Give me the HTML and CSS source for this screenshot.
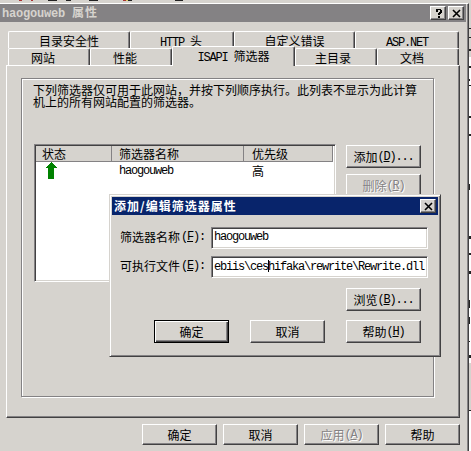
FILE: index.html
```html
<!DOCTYPE html>
<html lang="zh-CN">
<head>
<meta charset="utf-8">
<title>haogouweb 属性</title>
<link rel="stylesheet" href="styles.css">
</head>
<body>
<div class="desktop">
  <svg class="behind-top" width="471" height="3" shape-rendering="crispEdges"><path fill="#a33" d="M19 0h3v1h-3zM31 0h2v1h-2zM123 0h3v1h-3z"/><path fill="#222" d="M48 0h9v1h-9zM66 0h5v1h-5zM89 0h9v1h-9zM128 0h4v1h-4zM175 0h8v1h-8z"/><path fill="#dc6" d="M126 0h2v1h-2z"/></svg>
  <div class="stage">
    <main class="window">
      <header class="titlebar">
        <h1><span class="en">haogouweb </span>属性</h1>
        <button class="cap"><svg width="9" height="9" shape-rendering="crispEdges"><path d="M2 0h5v1h1v3h-1v1h-1v1h-2v-2h1v-1h1v-2h-2v2h-2v-2h0zM4 7h2v2h-2z"/></svg></button>
        <button class="cap"><svg width="9" height="9"><path d="M1 1l7 7M8 1l-7 7" stroke="#000" stroke-width="1.6"/></svg></button>
      </header>
      <nav class="tabs back">
        <a class="tab w1">目录安全性</a><a class="tab w2"><span class="en">HTTP </span>头</a><a class="tab w3">自定义错误</a><a class="tab w4"><span class="en">ASP.NET</span></a>
      </nav>
      <nav class="tabs front">
        <a class="tab">网站</a><a class="tab">性能</a><a class="tab active"><span class="en">ISAPI </span>筛选器</a><a class="tab near">主目录</a><a class="tab">文档</a>
      </nav>
      <section class="page">
        <div class="group">
          <p>下列筛选器仅可用于此网站，并按下列顺序执行。此列表不显示为此计算<br>机上的所有网站配置的筛选器。</p>
          <div class="columns">
            <div class="list">
              <div class="row head"><span>状态</span><span>筛选器名称</span><span>优先级</span></div>
              <div class="row"><span><svg width="12" height="17" shape-rendering="crispEdges"><path fill="#008200" d="M6 0l6 6h-3v11h-6v-11h-3z"/></svg></span><span class="en">haogouweb</span><span>高</span></div>
            </div>
            <div class="side">
              <button class="btn">添加<span class="en">(<u>D</u>)...</span></button>
              <button class="btn" disabled>删除<span class="en">(<u>R</u>)</span></button>
            </div>
          </div>
        </div>
      </section>
      <footer class="actions">
        <button class="btn">确定</button><button class="btn">取消</button><button class="btn" disabled>应用<span class="en">(<u>A</u>)</span></button><button class="btn">帮助</button>
      </footer>
    </main>
    <svg class="behind-right" width="2" height="448" shape-rendering="crispEdges"><path fill="#d6d3ce" d="M0 0h2v54h-2zM0 360h2v47h-2z"/><path fill="#222" d="M0 25h2v1h-2zM0 34h2v1h-2zM0 82h2v1h-2zM0 407h2v1h-2zM0 46h2v2h-2zM0 63h2v2h-2zM0 76h1v2h-1zM0 113h2v2h-2zM0 131h2v2h-2zM0 181h1v6h-1zM0 233h2v3h-2zM0 250h2v2h-2zM0 268h2v3h-2zM0 297h1v8h-1zM0 314h1v7h-1zM0 338h1v1h-1zM0 352h2v3h-2z"/></svg>
  </div>
</div>
<div class="dialog">
  <header class="titlebar blue">
    <h2>添加/编辑筛选器属性</h2>
    <button class="cap"><svg width="9" height="9"><path d="M1 1l7 7M8 1l-7 7" stroke="#000" stroke-width="1.6"/></svg></button>
  </header>
  <div class="field"><label>筛选器名称<span class="en">(<u>F</u>):</span></label><div class="input en">haogouweb</div></div>
  <div class="field"><label>可执行文件<span class="en">(<u>E</u>):</span></label><div class="input en">ebiis\ces<i class="caret"></i>hifaka\rewrite\Rewrite.dll</div></div>
  <div class="browse"><button class="btn">浏览<span class="en">(<u>B</u>)...</span></button></div>
  <div class="choices"><button class="btn default">确定</button><button class="btn">取消</button><button class="btn">帮助<span class="en">(<u>H</u>)</span></button></div>
</div>
</body>
</html>
```
FILE: styles.css
```css
* { box-sizing: border-box; }
body {
  margin: 0;
  width: 471px;
  height: 451px;
  overflow: hidden;
  background: #fff;
  color: #000;
  font: 12px/12px "Noto Sans CJK SC", sans-serif;
  white-space: nowrap;
}
h1, h2, p { margin: 0; font-size: 12px; }
.en {
  font-family: "Liberation Mono", monospace;
  font-size: 12px;
  letter-spacing: -1.2px;
  white-space: pre;
}
u { text-underline-offset: 1px; }
.desktop { display: flex; flex-direction: column; width: 471px; height: 451px; }
.behind-top { display: block; flex: none; background: #d6d3ce; }
.stage { display: flex; height: 448px; }
.behind-right { display: block; flex: none; }
.window {
  width: 469px;
  height: 448px;
  background: #d6d3ce;
  border-top: 1px solid #fff;
  border-right: 1px solid #424142;
  box-shadow: inset -1px 0 #848284;
}
.titlebar {
  display: flex;
  align-items: center;
  width: 466px;
  height: 18px;
  padding: 0 2px;
  gap: 2px;
  background: #848284;
  color: #d6d3ce;
}
.titlebar h1, .titlebar h2 { flex: 1; font-weight: 700; letter-spacing: 1px; }
.titlebar h1 .en { letter-spacing: -0.2px; }
.cap {
  display: flex;
  align-items: center;
  justify-content: center;
  width: 16px;
  height: 14px;
  padding: 0;
  background: #d6d3ce;
  border: 1px solid;
  border-color: #fff #424142 #424142 #fff;
  box-shadow: inset -1px -1px #848284;
}
.tabs { display: flex; }
.back { margin: 9px 0 0 8px; height: 17px; }
.front { margin-left: 8px; height: 17px; }
.tab {
  width: 82px;
  height: 17px;
  padding-top: 3px;
  text-align: center;
  border: 1px solid #fff;
  border-right: 1px solid #424142;
  border-bottom: 0;
  border-radius: 2px 2px 0 0;
  box-shadow: inset -1px 0 #848284;
}
.front .tab { padding-right: 12px; }
.front .near { padding-right: 6px; }
.w1 { width: 122px; }
.w2 { width: 104px; padding-right: 2px; }
.w3 { width: 121px; }
.w4 { width: 104px; }
.front .active {
  position: relative;
  width: 123px;
  height: 20px;
  margin-top: -2px;
  padding-right: 0;
  background: #d6d3ce;
}
.page {
  width: 454px;
  height: 353px;
  margin-left: 6px;
  padding: 12px 0 0 14px;
  border: 1px solid;
  border-color: #fff #424142 #424142 #fff;
  box-shadow: inset -1px -1px #848284;
}
.group {
  width: 413px;
  height: 319px;
  padding: 5px 0 0 11px;
  border: 1px solid #848284;
  box-shadow: inset 1px 1px #fff, 1px 1px #fff;
}
.columns { display: flex; gap: 10px; margin: 36px 0 0 1px; }
.list {
  width: 302px;
  height: 138px;
  background: #fff;
  border: 1px solid;
  border-color: #848284 #fff #fff #848284;
  box-shadow: inset 1px 1px #424142, inset -1px -1px #d6d3ce;
  padding: 1px;
}
.row { display: flex; height: 17px; align-items: center; }
.row span { width: 132px; padding-left: 7px; }
.row span:first-child { width: 76px; padding-left: 6px; }
.row span:last-child { width: 89px; padding-left: 8px; }
.row svg { display: block; margin-left: 3px; }
.head { height: 16px; width: 297px; }
.head span {
  height: 16px;
  padding-top: 2px;
  background: #d6d3ce;
  border-right: 1px solid #848284;
  border-bottom: 1px solid #848284;
  box-shadow: 1px 0 #fff;
}
.side { display: flex; flex-direction: column; gap: 6px; margin-top: 1px; }
.btn {
  display: flex;
  align-items: center;
  justify-content: center;
  width: 75px;
  height: 23px;
  padding: 0;
  background: #d6d3ce;
  color: #000;
  font: inherit;
  border: 1px solid;
  border-color: #fff #424142 #424142 #fff;
  box-shadow: inset -1px -1px #848284;
}
.btn:disabled { color: #848284; text-shadow: 1px 1px #fff; }
.actions { display: flex; gap: 6px; margin: 6px 0 0 142px; }
.actions .btn { height: 21px; }
.dialog {
  position: absolute;
  left: 109px;
  top: 194px;
  width: 332px;
  height: 163px;
  padding: 2px;
  background: #d6d3ce;
  border: 1px solid;
  border-color: #d6d3ce #424142 #424142 #d6d3ce;
  box-shadow: inset 1px 1px #fff, inset -1px -1px #848284;
}
.blue { width: 326px; background: #08246b; color: #fff; }
.field { display: flex; align-items: flex-start; margin: 12px 0 0 8px; }
.field + .field { margin-top: 7px; }
.field label { display: flex; align-items: center; gap: 1px; width: 91px; padding-top: 4px; }
.input {
  width: 217px;
  height: 22px;
  padding: 3px 0 0 2px;
  line-height: 12px;
  background: #fff;
  border: 1px solid;
  border-color: #848284 #fff #fff #848284;
  box-shadow: inset 1px 1px #424142, inset -1px -1px #d6d3ce;
}
.caret {
  display: inline-block;
  width: 1px;
  height: 12px;
  margin-right: -1px;
  vertical-align: -2px;
  background: #000;
}
.browse { margin: 10px 0 0 234px; }
.choices { display: flex; gap: 21px; margin: 9px 0 0 42px; }
.default {
  outline: 1px solid #000;
  outline-offset: -1px;
  border-color: #000;
  box-shadow: inset 1px 1px #fff, inset -1px -1px #424142, inset -2px -2px #848284;
}
```
